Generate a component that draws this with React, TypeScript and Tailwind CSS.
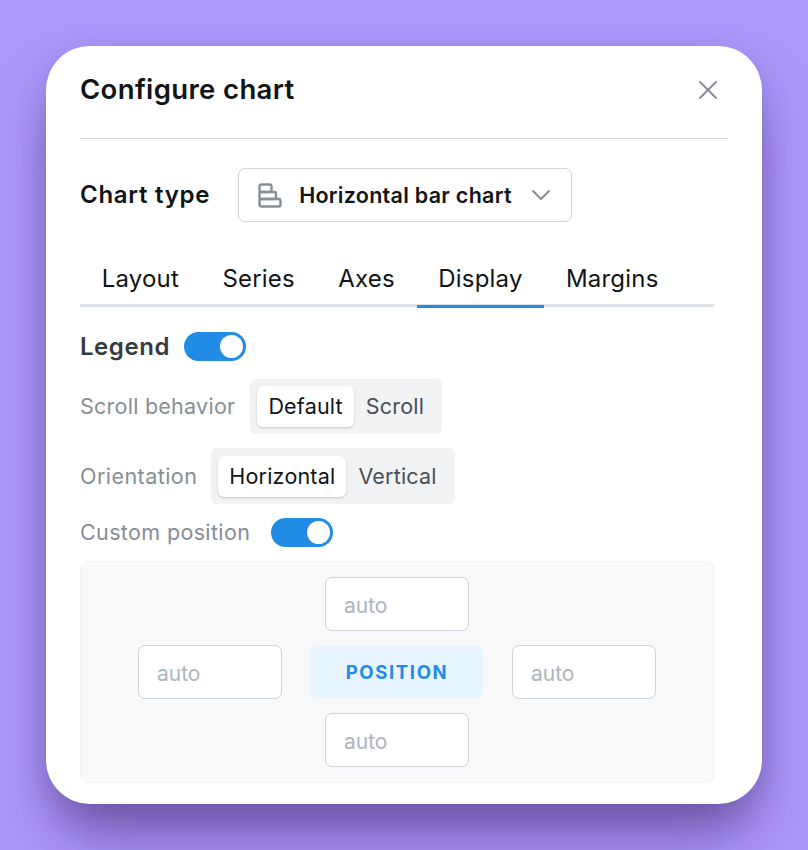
import React from 'react';
import { X, ChevronDown } from 'lucide-react';

const tabs = ['Layout', 'Series', 'Axes', 'Display', 'Margins'];

const Toggle = () => (
  <div className="w-[62px] h-[29px] rounded-full bg-[#228be6] flex items-center justify-end pr-[3px]">
    <div className="w-[23px] h-[23px] rounded-full bg-white" />
  </div>
);

const Segmented = ({ items, className }: { items: string[]; className: string }) => (
  <div className={`flex items-center rounded-[6px] bg-[#f1f3f5] px-[7px] tracking-[0.2px] ${className}`}>
    <div className="flex items-center px-[11px] rounded-[6px] bg-white text-[#111418] shadow-[0_1px_3px_rgba(0,0,0,0.1),0_1px_2px_rgba(0,0,0,0.1)] h-[41px]">{items[0]}</div>
    <div className="pl-[12px] pr-[11px] text-[#495057]">{items[1]}</div>
  </div>
);

const AutoInput = () => (
  <div className="w-[144px] h-[54px] rounded-[7px] border border-[#ced4da] bg-white flex items-center pl-[18px] pt-[2px] text-[21px] text-[#adb5bd]">auto</div>
);

export default function App() {
  return (
    <div className="w-[808px] h-[850px] overflow-hidden bg-[#ae98fb] p-[46px] font-['Inter','Liberation_Sans',sans-serif]">
      <div className="w-[716px] h-[758px] rounded-[44px] bg-white px-[34px] shadow-[0_40px_60px_-10px_rgba(60,40,110,0.55),0_10px_30px_rgba(60,40,110,0.2)]">
        <div className="h-[93px] w-[648px] border-b border-[#ced4da] flex items-center justify-between pb-[5px]">
          <h1 className="text-[27.5px] font-semibold tracking-[0.36px] text-[#111418]">Configure chart</h1>
          <X className="w-[32px] h-[32px] text-[#868e96] mr-[4px]" strokeWidth={1.5} />
        </div>

        <div className="mt-[29px] flex items-center gap-[28px]">
          <span className="text-[24px] font-semibold tracking-[0.72px] text-[#111418]">Chart type</span>
          <div className="w-[334px] h-[54px] rounded-[7px] border border-[#ced4da] flex items-center pl-[19px] pr-[14px]">
            <svg width="24" height="25" viewBox="0 0 24 25" fill="none" stroke="#868e96" strokeWidth="2.4" strokeLinejoin="round">
              <rect x="1.5" y="1.5" width="12" height="7.5" rx="2" />
              <rect x="1.5" y="9" width="16.5" height="7" rx="1" />
              <rect x="1.5" y="16" width="21" height="7.5" rx="2" />
            </svg>
            <span className="ml-[17px] text-[21.5px] font-semibold tracking-[0.28px] text-[#111418] whitespace-nowrap">Horizontal bar chart</span>
            <ChevronDown className="ml-auto w-[32px] h-[32px] text-[#868e96]" strokeWidth={1.5} />
          </div>
        </div>

        <div className="mt-[27px] w-[634px] h-[58px] flex border-b-[3px] border-[#dee2e6]">
          {tabs.map((t) => (
            <div
              key={t}
              className={`h-[59px] px-[21.7px] pt-[4px] flex items-center text-[24px] tracking-[0.2px] text-[#111418] border-b-[3px] ${t === 'Display' ? 'border-[#228be6]' : 'border-transparent'}`}
            >
              {t}
            </div>
          ))}
        </div>

        <div className="mt-[20px] flex items-center gap-[14px]">
          <span className="text-[24px] pt-[2px] font-semibold tracking-[0.55px] text-[#343a40]">Legend</span>
          <Toggle />
        </div>

        <div className="mt-[14px] flex items-center gap-[15px] text-[21.5px]">
          <span className="tracking-[0.25px] text-[#868e96]">Scroll behavior</span>
          <Segmented items={['Default', 'Scroll']} className="h-[55px]" />
        </div>

        <div className="mt-[14px] flex items-center gap-[14px] text-[21.5px]">
          <span className="tracking-[0.45px] text-[#868e96]">Orientation</span>
          <Segmented items={['Horizontal', 'Vertical']} className="h-[56px]" />
        </div>

        <div className="mt-[12px] flex items-center gap-[21px]">
          <span className="text-[21.5px] tracking-[0.36px] text-[#868e96]">Custom position</span>
          <Toggle />
        </div>

        <div className="mt-[13px] w-[634px] h-[222px] rounded-[8px] border border-[#f1f3f5] bg-[#f8f9fa] flex flex-col items-center justify-center gap-[14px]">
          <AutoInput />
          <div className="flex items-center gap-[29px]">
            <AutoInput />
            <div className="w-[172px] h-[50px] pt-[2px] rounded-[4px] bg-[#e7f5ff] flex items-center justify-center text-[18.5px] font-bold tracking-[1.65px] text-[#228be6]">POSITION</div>
            <AutoInput />
          </div>
          <AutoInput />
        </div>
      </div>
    </div>
  );
}
